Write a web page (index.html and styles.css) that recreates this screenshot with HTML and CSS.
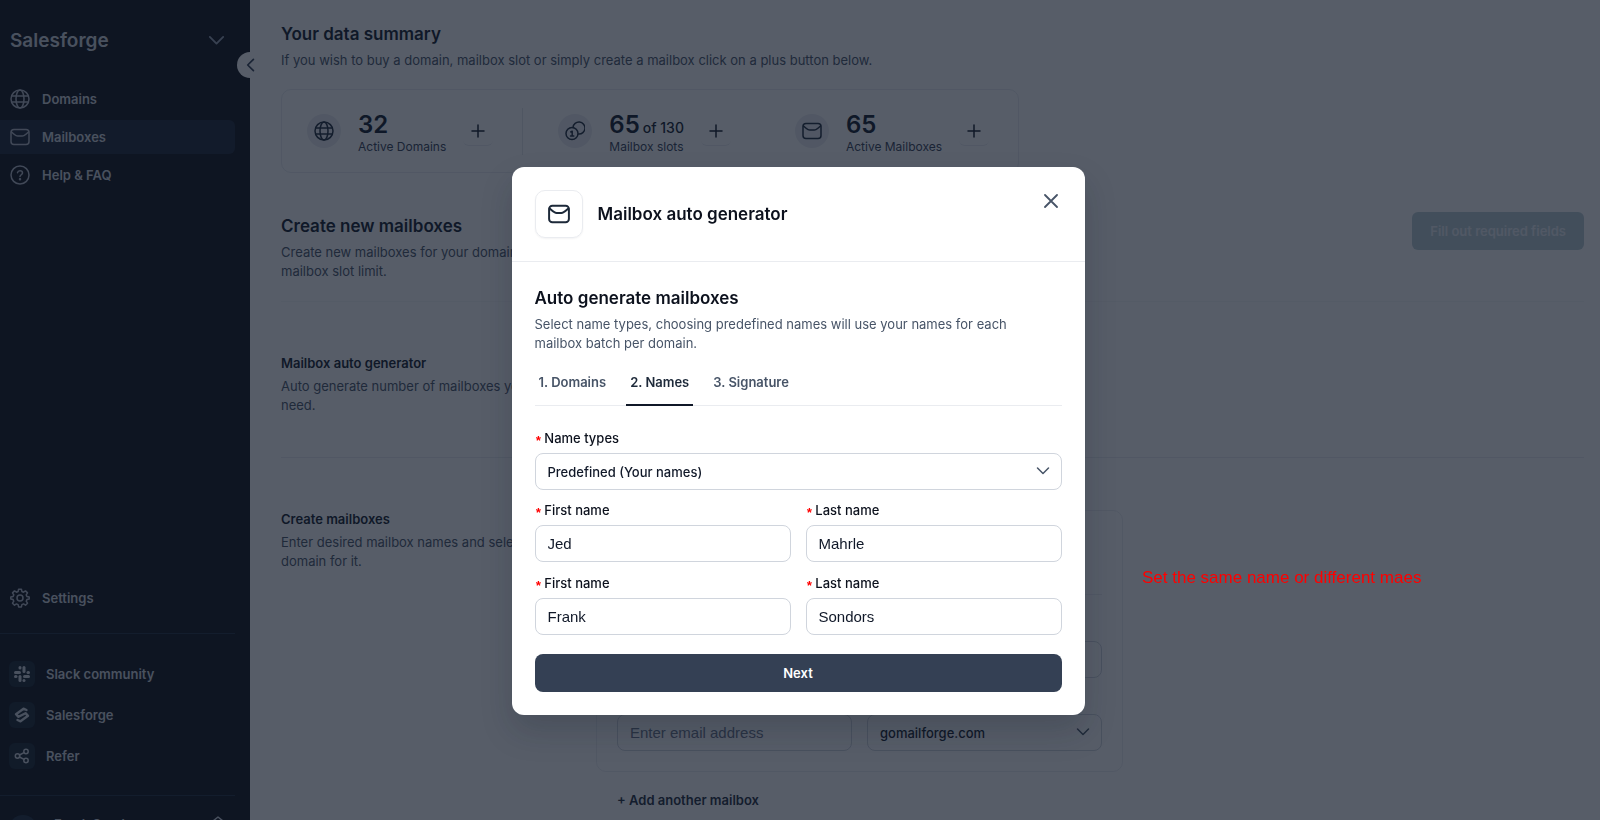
FILE: index.html
```html
<!DOCTYPE html>
<html lang="en">
<head>
    <meta charset="UTF-8">
    <meta name="viewport" content="width=device-width, initial-scale=1.0">
    <title>Mailboxes</title>
    <link rel="stylesheet" href="styles.css">
</head>
<body>
    <!-- Shared icons -->
    <svg class="sprite" aria-hidden="true">
        <symbol id="globe" viewBox="0 0 20 20"><circle cx="10" cy="10" r="9"/><ellipse cx="10" cy="10" rx="4" ry="9"/><path d="M2 7h16M2 13h16"/></symbol>
        <symbol id="mail" viewBox="0 0 20 20"><rect x="1" y="2.500" width="18" height="15" rx="3"/><path d="M1.500 5c1.800 1.600 3.300 3 4.600 3.600.6.300 1 .4 1.700.4h4.400c.7 0 1.100-.1 1.700-.4 1.300-.6 2.800-2 4.600-3.600"/></symbol>
        <symbol id="down" viewBox="0 0 14 14"><path d="M1.500 4l5.500 5.500L12.500 4"/></symbol>
        <symbol id="plus" viewBox="0 0 14 14"><path d="M7 1v12M1 7h12"/></symbol>
    </svg>

    <div class="page">
        <aside class="sidebar">
            <button class="workspace">Salesforge <svg class="icon chevron"><use href="#down"/></svg></button>
            <button class="collapse" aria-label="Collapse sidebar"><svg viewBox="0 0 14 14" class="icon"><path d="M10 2L5 7l5 5"/></svg></button>

            <nav class="menu">
                <a href="#"><svg class="icon"><use href="#globe"/></svg>Domains</a>
                <a href="#" class="active"><svg class="icon"><use href="#mail"/></svg>Mailboxes</a>
                <a href="#"><svg class="icon" viewBox="0 0 20 20"><circle cx="10" cy="10" r="9"/><path d="M7.500 7.700c.3-1.300 1.200-2 2.500-2s2.500.9 2.500 2.200c0 1.700-2.500 2-2.500 3.600"/><circle class="dot" cx="10" cy="14.300" r=".5"/></svg>Help &amp; FAQ</a>
            </nav>

            <div class="menu settings">
                <a href="#"><svg class="icon" viewBox="0 0 20 20"><circle cx="10" cy="10" r="3"/><path d="M8.600 1.200h2.800l.5 2.300 1.600.7 2-1.300 2 2-1.300 2 .7 1.600 2.300.5v2.100l-2.300.5-.7 1.600 1.300 2-2 2-2-1.300-1.600.7-.5 2.300H8.600l-.5-2.300-1.600-.7-2 1.300-2-2 1.300-2-.7-1.600L.8 11.100V9l2.300-.5.7-1.600-1.300-2 2-2 2 1.300 1.600-.7z"/></svg>Settings</a>
            </div>

            <div class="links">
                <a href="#"><span class="tile"><svg viewBox="0 0 16 16"><g class="fill"><rect x="0" y="5" width="7" height="3" rx="1.500"/><rect x="4.500" y="0" width="3" height="3.500" rx="1.500"/><rect x="8.500" y="0" width="3" height="7" rx="1.500"/><rect x="12.500" y="5" width="3.500" height="3" rx="1.500"/><rect x="9" y="9" width="7" height="3" rx="1.500"/><rect x="8.500" y="13" width="3" height="3" rx="1.500"/><rect x="4.500" y="9" width="3" height="7" rx="1.500"/><rect x="0" y="9" width="3.500" height="3" rx="1.500"/></g></svg></span>Slack community</a>
                <a href="#"><span class="tile"><svg viewBox="0 0 16 16"><g class="thick"><path d="M12.500 3L9.500 1.700 2 7.200 4.500 9.800 11.500 6.200 14 8.800 6.500 14.300 3.500 13"/></g></svg></span>Salesforge</a>
                <a href="#"><span class="tile"><svg viewBox="0 0 16 16"><circle cx="3.500" cy="8" r="2.200"/><circle cx="12" cy="3.500" r="2.200"/><circle cx="12" cy="12.500" r="2.200"/><path d="M5.500 7l4.500-2.400M5.500 9l4.500 2.400"/></svg></span>Refer</a>
            </div>

            <div class="profile">
                <span class="avatar"></span>
                <span>Frank Sondors</span>
                <svg class="icon" viewBox="0 0 14 20"><path d="M2 6l5-4 5 4M2 14l5 4 5-4"/></svg>
            </div>
        </aside>

        <main>
            <section class="summary">
                <h2>Your data summary</h2>
                <p>If you wish to buy a domain, mailbox slot or simply create a mailbox click on a plus button below.</p>
                <div class="stats">
                    <div class="stat">
                        <span class="circle"><svg class="icon"><use href="#globe"/></svg></span>
                        <div><strong>32</strong><small>Active Domains</small></div>
                        <button aria-label="Add domain"><svg class="icon"><use href="#plus"/></svg></button>
                    </div>
                    <div class="stat">
                        <span class="circle"><svg class="icon" viewBox="0 0 20 20"><circle cx="7" cy="12.500" r="6"/><path d="M8 6.500A6 6 0 1 1 13.500 13M5.800 11l1.400-.8v4.800M5.500 15h3.300"/></svg></span>
                        <div><strong>65 <span>of 130</span></strong><small>Mailbox slots</small></div>
                        <button aria-label="Add slot"><svg class="icon"><use href="#plus"/></svg></button>
                    </div>
                    <div class="stat">
                        <span class="circle"><svg class="icon"><use href="#mail"/></svg></span>
                        <div><strong>65</strong><small>Active Mailboxes</small></div>
                        <button aria-label="Add mailbox"><svg class="icon"><use href="#plus"/></svg></button>
                    </div>
                </div>
            </section>

            <section class="create">
                <div class="intro">
                    <h2>Create new mailboxes</h2>
                    <p>Create new mailboxes for your domains per mailbox slot limit.</p>
                </div>
                <button class="submit" disabled>Fill out required fields</button>
            </section>

            <section class="row generator">
                <div class="intro">
                    <h3>Mailbox auto generator</h3>
                    <p>Auto generate number of mailboxes you need.</p>
                </div>
            </section>

            <section class="row">
                <div class="intro">
                    <h3>Create mailboxes</h3>
                    <p>Enter desired mailbox names and select domain for it.</p>
                </div>
                <div class="editor">
                    <div class="card">
                        <div class="card-head"></div>
                        <div class="card-body">
                            <div class="pair">
                                <input type="text" aria-label="First name">
                                <input type="text" aria-label="Last name">
                            </div>
                            <div class="pair">
                                <input type="text" placeholder="Enter email address" aria-label="Email address">
                                <div class="select">
                                    <select aria-label="Domain"><option>gomailforge.com</option></select>
                                    <svg class="icon"><use href="#down"/></svg>
                                </div>
                            </div>
                        </div>
                    </div>
                    <button class="add">+ Add another mailbox</button>
                </div>
            </section>
        </main>
    </div>

    <div class="overlay">
        <div class="modal" role="dialog" aria-labelledby="modal-title">
            <header>
                <span class="badge"><svg class="icon"><use href="#mail"/></svg></span>
                <h2 id="modal-title">Mailbox auto generator</h2>
                <button class="close" aria-label="Close"><svg class="icon" viewBox="0 0 14 14"><path d="M1 1l12 12M13 1L1 13"/></svg></button>
            </header>
            <form>
                <h2>Auto generate mailboxes</h2>
                <p>Select name types, choosing predefined names will use your names for each mailbox batch per domain.</p>
                <div class="tabs">
                    <button type="button">1. Domains</button>
                    <button type="button" class="current">2. Names</button>
                    <button type="button">3. Signature</button>
                </div>

                <label for="types"><i>*</i>Name types</label>
                <div class="select">
                    <select id="types"><option>Predefined (Your names)</option></select>
                    <svg class="icon"><use href="#down"/></svg>
                </div>

                <div class="pair">
                    <div>
                        <label for="first1"><i>*</i>First name</label>
                        <input type="text" id="first1" value="Jed">
                    </div>
                    <div>
                        <label for="last1"><i>*</i>Last name</label>
                        <input type="text" id="last1" value="Mahrle">
                    </div>
                    <div>
                        <label for="first2"><i>*</i>First name</label>
                        <input type="text" id="first2" value="Frank">
                    </div>
                    <div>
                        <label for="last2"><i>*</i>Last name</label>
                        <input type="text" id="last2" value="Sondors">
                    </div>
                </div>

                <button type="button" class="next">Next</button>
            </form>
        </div>
        <div class="note">Set the same name or different maes</div>
    </div>
</body>
</html>
```

FILE: styles.css
```css
* {
    box-sizing: border-box;
}
body {
    margin: 0;
    height: 100vh;
    overflow: hidden;
    font-family: Inter, sans-serif;
    font-size: 13px;
    line-height: 19px;
    color: #101828;
    background: #fff;
}
h2, h3, p {
    margin: 0;
}
h2 {
    font-size: 17px;
    line-height: 26px;
    font-weight: 600;
}
h3 {
    font-size: 13px;
    line-height: 19px;
    font-weight: 600;
}
p {
    margin-top: 4px;
    color: #475467;
}
a {
    color: inherit;
    text-decoration: none;
}
button {
    font: inherit;
    color: inherit;
    background: none;
    border: 0;
    padding: 0;
}
svg {
    fill: none;
    stroke: currentColor;
    stroke-width: 1.5;
    stroke-linecap: round;
    stroke-linejoin: round;
    flex: none;
}
.sprite {
    position: absolute;
    width: 0;
    height: 0;
}
.icon {
    width: 20px;
    height: 20px;
}
.page {
    display: flex;
}

/* Sidebar */
.sidebar {
    position: relative;
    flex: none;
    width: 250px;
    height: calc(100vh + 30px);
    padding: 24px 15px 0 0;
    display: flex;
    flex-direction: column;
    background: #0a0e17;
    color: #d0d5dd;
    font-weight: 600;
}
.workspace {
    display: flex;
    justify-content: space-between;
    align-items: center;
    height: 32px;
    padding: 0 10px;
    font-size: 19px;
    font-weight: 600;
}
.workspace .icon {
    width: 17px;
    height: 17px;
    color: #98a2b3;
}
.collapse {
    position: absolute;
    top: 52px;
    right: -13px;
    width: 26px;
    height: 26px;
    border-radius: 50%;
    background: #fff;
    color: #344054;
    display: grid;
    place-items: center;
}
.collapse .icon {
    width: 16px;
    height: 16px;
}
.menu {
    display: flex;
    flex-direction: column;
    gap: 4px;
    margin-top: 26px;
}
.menu a {
    display: flex;
    align-items: center;
    gap: 12px;
    height: 34px;
    padding-left: 10px;
    border-radius: 0 6px 6px 0;
}
.menu .active {
    background: #1a2333;
}
.menu .icon {
    color: #b4bac6;
}
.dot {
    fill: currentColor;
}
.settings {
    margin-top: auto;
    padding-bottom: 18px;
    border-bottom: 1px solid #1d2939;
}
.links {
    display: flex;
    flex-direction: column;
    gap: 15px;
    padding: 27px 0 26px;
    border-bottom: 1px solid #1d2939;
}
.links a {
    display: flex;
    align-items: center;
    gap: 11px;
    padding-left: 9px;
}
.tile {
    display: grid;
    place-items: center;
    width: 26px;
    height: 26px;
    border-radius: 6px;
    background: #14222e;
}
.tile svg {
    width: 16px;
    height: 16px;
}
.fill {
    fill: currentColor;
    stroke: none;
}
.thick {
    stroke-width: 2.4;
}
.profile {
    display: flex;
    gap: 17px;
    height: 54px;
    padding: 19px 9px 0;
}
.profile .avatar {
    width: 28px;
    height: 28px;
    border-radius: 50%;
    background: #1b2b3a;
}
.profile .icon {
    width: 16px;
    margin-left: auto;
}

/* Content */
main {
    flex: 1;
    padding: 21px 16px 0 31px;
}
.stats {
    display: inline-flex;
    margin-top: 19px;
    height: 84px;
    border: 1px solid #e9ecf0;
    border-radius: 10px;
    align-items: center;
}
.stat {
    display: flex;
    align-items: center;
    padding: 0 29px 0 35px;
}
.stat:first-child {
    padding-left: 25px;
    border-right: 1px solid #e4e7ec;
}
.stat div {
    padding-top: 3px;
}
.circle {
    display: grid;
    place-items: center;
    width: 34px;
    height: 34px;
    margin-right: 17px;
    border-radius: 50%;
    background: #eaecf0;
    color: #1d2939;
}
.stat strong, .stat small {
    display: block;
}
.stat strong {
    font-size: 24px;
    line-height: 28px;
    font-weight: 600;
}
.stat strong span {
    margin-left: -3px;
    font-size: 14px;
    line-height: 14px;
    font-weight: 500;
}
.stat small {
    font-size: 12px;
    line-height: 16px;
    color: #344054;
}
.stat button {
    display: grid;
    place-items: center;
    width: 30px;
    height: 30px;
    margin-left: 17px;
    border-radius: 6px;
    border-bottom: 1px solid #eaecf0;
}
.stat button .icon {
    width: 14px;
    height: 14px;
}
.create {
    display: flex;
    justify-content: space-between;
    align-items: flex-start;
    margin-top: 39px;
    padding-bottom: 20px;
    border-bottom: 1px solid #f6f7f9;
}
.create .intro {
    padding-top: 1px;
}
.intro {
    flex: none;
    width: 280px;
}
.submit {
    height: 38px;
    padding: 0 18px;
    border-radius: 6px;
    background: #b8cdd4;
    color: #e9eff3;
    font-weight: 600;
}
.row {
    display: flex;
    gap: 35px;
    padding-top: 52px;
}
.generator {
    padding-bottom: 42px;
    border-bottom: 1px solid #e9ecf0;
}
.editor {
    flex: none;
    width: 527px;
}
.card {
    border: 1px solid #eceef2;
    border-radius: 10px;
}
.card-head {
    height: 84px;
    margin: 0 20px;
    border-bottom: 1px solid #eceef2;
}
.card-body {
    display: grid;
    gap: 36px;
    padding: 46px 20px 20px;
}
.pair {
    display: grid;
    grid-template-columns: 1fr 1fr;
    gap: 15px;
}
input, select {
    display: block;
    width: 100%;
    height: 37px;
    padding: 0 12px;
    border: 1px solid #d0d5dd;
    border-radius: 8px;
    background: #fff;
    color: #101828;
}
input {
    font: 15px "Liberation Sans", sans-serif;
}
input::placeholder {
    color: #667085;
}
select {
    appearance: none;
    font: 500 13px Inter, sans-serif;
}
.select {
    position: relative;
}
.select .icon {
    position: absolute;
    top: 11px;
    right: 12px;
    width: 14px;
    height: 14px;
    color: #475467;
    pointer-events: none;
}
.add {
    margin: 19px 0 0 21px;
    font-weight: 600;
    color: #1d2939;
}

/* Modal */
.overlay {
    position: fixed;
    inset: 0;
    padding-right: 4px;
    background: rgba(16, 24, 40, 0.7);
}
.modal {
    width: 573px;
    margin: 167px auto 0;
    border-radius: 12px;
    background: #fff;
    box-shadow: 0 16px 32px rgba(16, 24, 40, 0.2);
    color: #0c111d;
}
.modal header {
    display: flex;
    align-items: center;
    gap: 15px;
    padding: 23px;
    border-bottom: 1px solid #eaecf0;
}
.badge {
    display: grid;
    place-items: center;
    width: 48px;
    height: 48px;
    border: 1px solid #eaecf0;
    border-radius: 10px;
    box-shadow: 0 1px 2px rgba(16, 24, 40, 0.05);
    color: #1d2939;
}
.badge .icon {
    width: 22px;
    height: 22px;
    stroke-width: 1.8;
}
.close {
    align-self: flex-start;
    display: grid;
    place-items: center;
    width: 22px;
    height: 22px;
    margin-left: auto;
    color: #475467;
}
.close .icon {
    width: 14px;
    height: 14px;
    stroke-width: 1.8;
}
.modal form {
    padding: 23px;
}
.modal p {
    max-width: 500px;
}
.tabs {
    display: flex;
    gap: 16px;
    margin: 17px 0 23px;
    border-bottom: 1px solid #eaecf0;
}
.tabs button {
    height: 36px;
    padding: 0 4px 9px;
    margin-bottom: -1px;
    border-bottom: 2px solid transparent;
    font-weight: 600;
    color: #475467;
}
.tabs .current {
    border-color: #101828;
    color: #1d2939;
}
label {
    display: block;
    height: 19px;
    margin-bottom: 5px;
    font-weight: 500;
}
label i {
    margin-right: 2px;
    font: bold 13px/1 "Liberation Mono", monospace;
    vertical-align: -2px;
    color: #f00;
}
.modal .pair {
    gap: 12px 15px;
    margin: 11px 0 19px;
}
.next {
    width: 100%;
    height: 38px;
    border-radius: 8px;
    background: #344054;
    color: #fff;
    font-weight: 600;
}
.note {
    position: absolute;
    top: 567px;
    left: 1142px;
    font: 17px/22px "Liberation Sans", sans-serif;
    color: #f00;
}
```
